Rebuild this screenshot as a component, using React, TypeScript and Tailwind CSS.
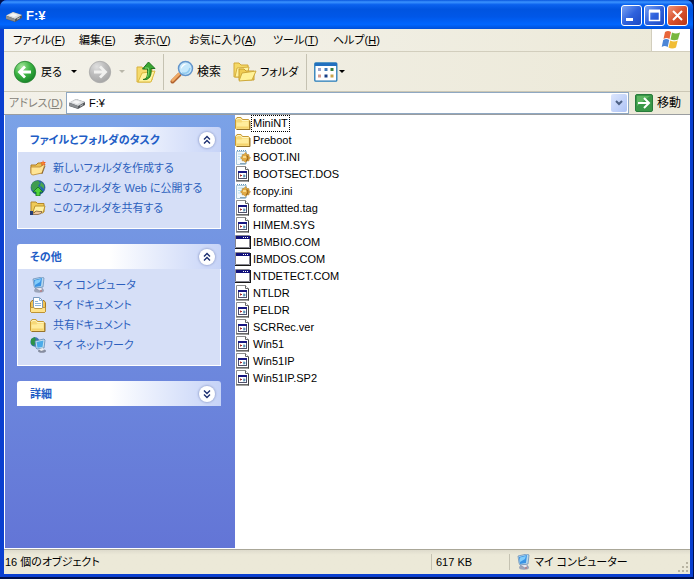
import { useState } from 'react';
import type { ReactNode } from 'react';

type FileKind = 'folder' | 'ini' | 'system' | 'program';

interface FileItem {
    name: string;
    kind: FileKind;
}

interface TaskItem {
    label: string;
    icon: ReactNode;
}

const MENUS = [
    { label: 'ファイル', mnemonic: 'F', width: 'w-[66px]' },
    { label: '編集', mnemonic: 'E', width: 'w-[55px]' },
    { label: '表示', mnemonic: 'V', width: 'w-[55px]' },
    { label: 'お気に入り', mnemonic: 'A', width: 'w-[84px]' },
    { label: 'ツール', mnemonic: 'T', width: 'w-[60px]' },
    { label: 'ヘルプ', mnemonic: 'H', width: 'w-[60px]' },
];

const FILES: FileItem[] = [
    { name: 'MiniNT', kind: 'folder' },
    { name: 'Preboot', kind: 'folder' },
    { name: 'BOOT.INI', kind: 'ini' },
    { name: 'BOOTSECT.DOS', kind: 'system' },
    { name: 'fcopy.ini', kind: 'ini' },
    { name: 'formatted.tag', kind: 'system' },
    { name: 'HIMEM.SYS', kind: 'system' },
    { name: 'IBMBIO.COM', kind: 'program' },
    { name: 'IBMDOS.COM', kind: 'program' },
    { name: 'NTDETECT.COM', kind: 'program' },
    { name: 'NTLDR', kind: 'system' },
    { name: 'PELDR', kind: 'system' },
    { name: 'SCRRec.ver', kind: 'system' },
    { name: 'Win51', kind: 'system' },
    { name: 'Win51IP', kind: 'system' },
    { name: 'Win51IP.SP2', kind: 'system' },
];

function DriveIcon() {
    return (
        <svg className="h-4 w-4 shrink-0" viewBox="0 0 16 16">
            <path d="M0 8 7 4l9 3v3l-7 4-9-3Z" fill="#55585c" />
            <path d="M0 7.5 7 4l9 3-7 4Z" fill="#d9dbdd" />
            <path d="m3 7.3 4-2 5 1.6-4 2Z" fill="#f6f6f6" />
            <path d="m0 7.8 9 3.2v2.6L0 10.8Z" fill="#8b8e92" />
            <path d="M11 11.2l3-1.6" stroke="#bfc3c6" strokeWidth="1" />
        </svg>
    );
}

function FolderIcon() {
    return (
        <svg className="h-4 w-4 shrink-0" viewBox="0 0 16 16">
            <path d="M.5 4.5 2 2.500h4l1.500 2h6l1 1v8l-1 1h-12l-1-1Z" fill="#f6d877" stroke="#c79a34" />
            <path d="M1.500 5 2.500 3.500h3l1.500 2h6.500" fill="none" stroke="#fff5c0" />
            <path d="M1.500 7.500h5l1-1h6v7h-12Z" fill="#ffec9c" />
            <path d="M1.500 11.500h12v2h-12Z" fill="#f5d36c" />
            <path d="M15 6v8.500H2" fill="none" stroke="#96732a" />
        </svg>
    );
}

function IniIcon() {
    return (
        <svg className="h-4 w-4 shrink-0" viewBox="0 0 16 16">
            <path d="M1.500 2.500h10v12l-1 1h-9Z" fill="#f2f9fd" stroke="#a9c6d8" />
            <path d="M2 1.500h10" stroke="#5f97bd" strokeDasharray="1 1" />
            <path d="M3 5h6M3 7.500h4M3 10h3" stroke="#b5dced" />
            <path d="M10.500 3.500 12 5.500l2 .2v1.600L15.500 9 14 10.200v1.600h-2l-1.500 1.700L9 11.800H7.200v-1.600L5.500 9l1.700-1.700V5.700L9 5.500Z" fill="#e2ab45" stroke="#b07d25" strokeWidth=".6" />
            <path d="M11.500 6.500c2 1 2 4-.5 5.500" fill="none" stroke="#a06b1a" strokeWidth="1.300" />
            <path d="M8 8h3" stroke="#ffe9a0" strokeWidth="1.500" />
            <path d="M5 14.500h6" stroke="#86a5b8" />
        </svg>
    );
}

function SystemIcon() {
    return (
        <svg className="h-4 w-4 shrink-0" viewBox="0 0 16 16">
            <path d="M1.500.5h9l3 3v11h-12Z" fill="#fff" stroke="#8c8c8c" />
            <path d="M10.500.5v3h3" fill="#fff" stroke="#666" />
            <path d="M13.500 4v11.500M1 15h13" fill="none" stroke="#444" />
            <rect x="3.500" y="5.500" width="8" height="7" fill="#fff" stroke="#50506c" />
            <path d="M3 6h9" stroke="#161681" strokeWidth="2" />
            <path d="M5 9.500h2M5.500 8.500v2" stroke="#a63030" />
            <path d="M9 8.500v3M8.500 10h2" stroke="#216f9c" />
        </svg>
    );
}

function ProgramIcon() {
    return (
        <svg className="h-4 w-4 shrink-0" viewBox="0 0 16 16">
            <path d="M.5 1.500h14v12H.5Z" fill="#fff" stroke="#85858f" />
            <path d="M1 3.500h14" stroke="#11117a" strokeWidth="3" />
            <path d="M8 3.500h1M10 3.500h1M12 3.500h1" stroke="#fff" />
            <path d="M15.500 2v12M0 14.500h16" fill="none" stroke="#161616" />
        </svg>
    );
}

function NewFolderIcon() {
    return (
        <svg className="h-4 w-4" viewBox="0 0 16 16">
            <path d="M1 5h5l2-2h4v10H1Z" fill="#eac055" stroke="#af7b22" />
            <path d="M1 7h9l5-3-3 9-9 2-2-1Z" fill="#ffe596" stroke="#bb8831" strokeWidth=".8" />
            <path d="m13 0 .7 2L16 2l-1.500 1.500 1 2-2-1-2 1.200.5-2.200-1.700-1.300 2.200-.1Z" fill="#f05b1f" />
            <circle cx="12.800" cy="3.300" r="1.200" fill="#f6862f" />
            <path d="m12 14 3-8" stroke="#715023" strokeWidth=".7" />
        </svg>
    );
}

function PublishIcon() {
    return (
        <svg className="h-4 w-4" viewBox="0 0 16 16">
            <circle cx="8" cy="7.500" r="7" fill="#2466ae" stroke="#244f78" strokeWidth=".6" />
            <path d="m3 2 5-1.500 2 2.500-2 3 3 2-3 4-6-2-1-4Z" fill="#3f9c50" />
            <path d="m11 2 3 3v4l-2-2-2-1Z" fill="#4aa94e" />
            <path d="m8 7 5 5h-3v4H6v-4H3Z" fill="#50d33b" stroke="#126c20" strokeWidth=".8" />
        </svg>
    );
}

function SharedFolderIcon() {
    return (
        <svg className="h-4 w-4" viewBox="0 0 16 16">
            <path d="M1 2h5l1.500 1.500H14V12H1Z" fill="#efca58" stroke="#b4872c" />
            <path d="m3 12 2-6h10l-2 7Z" fill="#fff0a2" stroke="#bd942b" />
            <path d="M0 13h4l2-2 3 .5h3l-1 2-3 1H0Z" fill="#ecc49a" stroke="#72522e" strokeWidth=".7" />
            <path d="M0 11h3v4H0Z" fill="#253d75" />
        </svg>
    );
}

function ComputerIcon() {
    return (
        <svg className="h-4 w-4 shrink-0" viewBox="0 0 16 16">
            <ellipse cx="9" cy="13.500" rx="5" ry="2.200" fill="#9ca5b8" />
            <path d="m5 11 5-1 3 2-3 2Z" fill="#e8e7ed" stroke="#777d9b" strokeWidth=".5" />
            <path d="m3 2 9-2 2 1-1 9-8 1-1-2Z" fill="#b9d9ed" stroke="#5e87b3" strokeWidth=".7" />
            <path d="m4 3 8-2-1 8-6 1Z" fill="#3993e4" />
            <path d="m5 3.500 6-1.500-1 3-5 3Z" fill="#83cdfa" />
            <path d="M10 14h2" stroke="#c76b68" />
        </svg>
    );
}

function DocumentsIcon() {
    return (
        <svg className="h-4 w-4" viewBox="0 0 16 16">
            <path d="M.5 5.500 2 3.500h12l1.500 2v9l-1 1h-13l-1-1Z" fill="#f0c457" stroke="#a77a24" />
            <path d="M3.500.5h6l3 3v8h-9Z" fill="#fff" stroke="#7899bd" />
            <path d="M9.500.5v3h3M5 4.500h3M5 6.500h6M5 8.500h6" fill="none" stroke="#8ab4d9" />
            <path d="M.5 10.500h3l1.500 1h7l1-1h2.500v4l-1 1h-13l-1-1Z" fill="#ffe28a" stroke="#b88b2d" strokeWidth=".8" />
        </svg>
    );
}

function NetworkIcon() {
    return (
        <svg className="h-4 w-4" viewBox="0 0 16 16">
            <circle cx="5" cy="5" r="4.700" fill="#3c75b8" />
            <path d="M1 2 5 0l1 4-2 5-3-2Z" fill="#2c9347" />
            <ellipse cx="12" cy="14" rx="4" ry="1.800" fill="#858c9f" />
            <path d="m5 4 9-2 1 1-1 8-7 1-1-1Z" fill="#c7e2f0" stroke="#4f7baa" strokeWidth=".7" />
            <path d="m6.500 5 7-1.500-1 6.500-5 .8Z" fill="#4aabe9" />
            <path d="m9 12 4-1 1 2-3 1Z" fill="#eee" />
        </svg>
    );
}

const FOLDER_TASKS: TaskItem[] = [
    { label: '新しいフォルダを作成する', icon: <NewFolderIcon /> },
    { label: 'このフォルダを Web に公開する', icon: <PublishIcon /> },
    { label: 'このフォルダを共有する', icon: <SharedFolderIcon /> },
];

const OTHER_PLACES: TaskItem[] = [
    { label: 'マイ コンピュータ', icon: <ComputerIcon /> },
    { label: 'マイ ドキュメント', icon: <DocumentsIcon /> },
    { label: '共有ドキュメント', icon: <FolderIcon /> },
    { label: 'マイ ネットワーク', icon: <NetworkIcon /> },
];

function FileIcon({ kind }: { kind: FileKind }) {
    if (kind === 'folder') return <FolderIcon />;
    if (kind === 'ini') return <IniIcon />;
    if (kind === 'program') return <ProgramIcon />;
    return <SystemIcon />;
}

function RoundArrow({ back = false }: { back?: boolean }) {
    return (
        <svg className="h-6 w-6 shrink-0" viewBox="0 0 24 24">
            <defs>
                <radialGradient id={back ? 'backFill' : 'forwardFill'} cx="35%" cy="25%" r="80%">
                    <stop offset="0" stopColor={back ? '#a4e69a' : '#e0e0e0'} />
                    <stop offset=".5" stopColor={back ? '#3db444' : '#bcbcbc'} />
                    <stop offset="1" stopColor={back ? '#168226' : '#a4a4a4'} />
                </radialGradient>
            </defs>
            <circle cx="12" cy="12" r="10.700" fill={back ? 'url(#backFill)' : 'url(#forwardFill)'} stroke={back ? '#23822d' : '#aaa'} strokeWidth=".8" />
            <path
                d={back ? 'M18 12H7M12 6.500 6.500 12l5.500 5.500' : 'M6 12h11M12 6.500l5.500 5.500-5.500 5.500'}
                fill="none"
                stroke={back ? '#fff' : '#f1f1ef'}
                strokeWidth="2.800"
            />
        </svg>
    );
}

function UpFolderIcon() {
    return (
        <svg className="h-6 w-5 shrink-0" viewBox="0 0 20 24">
            <path d="M1 7h5l2 2h8v11l-2 2H1Z" fill="#f5da6c" stroke="#d8b13f" />
            <path d="m2 22 4-9 13-2-4 11Z" fill="#fff3a0" stroke="#dbb83e" />
            <path d="M7 19.500c4-.5 5-4 4.500-10.500H6.500L12.500 2 19 8.500h-4c.8 7-1.500 12-8 11Z" fill="#3aa832" stroke="#1f7420" />
            <path d="M9 8h3.500c.5 4 0 7-1.500 9" fill="none" stroke="#7fd66f" />
        </svg>
    );
}

function SearchIcon() {
    return (
        <svg className="h-6 w-6 shrink-0" viewBox="0 0 24 24">
            <path d="m2.500 21.500 7-7" stroke="#b0622f" strokeWidth="4" strokeLinecap="round" />
            <path d="m2.500 20.500 7-7" stroke="#f0a964" strokeWidth="2.500" strokeLinecap="round" />
            <circle cx="15.500" cy="8.500" r="7" fill="#c5e8fc" stroke="#6395cb" strokeWidth="1.500" />
            <path d="M11 9c0-4 3-6 7-5-3 0-5 2-7 5Z" fill="#fff" />
            <path d="M12 13c4 1 7-1 8-5" fill="none" stroke="#91cbef" strokeWidth="1.500" />
        </svg>
    );
}

function FoldersIcon() {
    return (
        <svg className="h-6 w-6 shrink-0" viewBox="0 0 24 24">
            <path d="M1 3h5l2 2h7v12H1Z" fill="#f5d966" stroke="#d2a938" />
            <path d="m2 17 2-9 12-1-2 10Z" fill="#fff3a1" stroke="#d5ae43" />
            <path d="M6 9h5l2 2h8v9H6Z" fill="#efcc50" stroke="#c99e31" />
            <path d="m6 21 3-8 14-2-4 9Z" fill="#fff297" stroke="#ceaa3c" />
        </svg>
    );
}

function ViewsIcon() {
    return (
        <svg className="h-5 w-6 shrink-0" viewBox="0 0 24 20">
            <rect x=".8" y=".8" width="22" height="18.400" rx="1" fill="#fff" stroke="#2279b7" strokeWidth="1.300" />
            <path d="M1 2.500h22" stroke="#2170bf" strokeWidth="3" />
            <path d="M4 14h3" stroke="#d79b8c" strokeWidth="3" />
            <path d="M4 7.500h3" stroke="#98a4cd" strokeWidth="3" />
            <path d="M10.500 7.500h3" stroke="#427ab7" strokeWidth="3" />
            <path d="M10.500 14h3" stroke="#163d86" strokeWidth="3" />
            <path d="M16.500 7.500h3" stroke="#377e3e" strokeWidth="3" />
            <path d="M16.500 14h3" stroke="#c9a54a" strokeWidth="3" />
        </svg>
    );
}

function WindowsFlag() {
    return (
        <svg className="h-5 w-5" viewBox="0 0 20 20">
            <path d="M4 2c2-1.500 4-1.500 6 0L8.500 9C6.500 7.800 4.500 7.800 2.500 9Z" fill="#e8663a" />
            <path d="M11 2.500c2.500 1.300 5 1.300 8 0L17 9.500c-2.500 1-5 1-7.500 0Z" fill="#78b73e" />
            <path d="M2.200 10c2-1.200 4-1.200 6 0L6.700 17c-2-1.500-4-1.500-6 0Z" fill="#4d86d6" />
            <path d="M9.200 10.500c2.500 1.200 5 1.200 7.500 0L15 17.500c-2.500 1.200-5 1.200-7.500 0Z" fill="#f1bd35" />
        </svg>
    );
}

function DropArrow({ muted = false }: { muted?: boolean }) {
    return (
        <svg className="h-1 w-2 shrink-0" viewBox="0 0 8 4">
            <path d="M1 0h6L4 3Z" fill={muted ? '#b9b7aa' : '#000'} />
        </svg>
    );
}

function Mnemonic({ label, letter }: { label: string; letter: string }) {
    return (
        <>
            {label}(<span className="underline">{letter}</span>)
        </>
    );
}

function CaptionButton({ label, close = false, children }: { label: string; close?: boolean; children: ReactNode }) {
    return (
        <button
            aria-label={label}
            className={`h-[21px] w-[21px] rounded-[3px] border border-white ${close
                ? 'bg-linear-to-br from-[#ee9478] via-[#d9512c] to-[#b83616]'
                : 'bg-linear-to-br from-[#7ba1f2] via-[#2f62dd] to-[#1c49c4]'
                }`}
        >
            <svg className="h-[19px] w-[19px]" viewBox="0 0 19 19" fill="none" stroke="#fff">
                {children}
            </svg>
        </button>
    );
}

function TaskPanel({ title, items, initiallyOpen = true }: { title: string; items: TaskItem[]; initiallyOpen?: boolean }) {
    const [open, setOpen] = useState(initiallyOpen);

    return (
        <section>
            <div className="flex h-[25px] items-center justify-between rounded-t-[3px] bg-linear-to-r from-white from-45% to-[#c6d3f7] pr-[6px] pl-[13px]">
                <h2 className="font-bold text-[#215dc6]">{title}</h2>
                <button
                    aria-label={title}
                    aria-expanded={open}
                    onClick={() => setOpen(!open)}
                    className="flex h-4 w-4 items-center justify-center rounded-full bg-white shadow-[0_0_2px_1px_#a3b0d8]"
                >
                    <svg className={`h-[10px] w-[10px] ${open ? '' : 'rotate-180'}`} viewBox="0 0 10 10" fill="none" stroke="#1c2f70" strokeWidth="1.400">
                        <path d="m2 4.500 3-3 3 3M2 8.500l3-3 3 3" />
                    </svg>
                </button>
            </div>
            {open && (
                <ul className="border border-t-0 border-white bg-[#d6dff7] pt-[6px] pb-[10px] pl-3">
                    {items.map((item) => (
                        <li key={item.label}>
                            <a href="#" className="flex h-5 items-center gap-[7px] whitespace-nowrap text-[#2d5fbd] hover:underline">
                                {item.icon}
                                {item.label}
                            </a>
                        </li>
                    ))}
                </ul>
            )}
        </section>
    );
}

export default function App() {
    const [selected, setSelected] = useState('MiniNT');
    const [address, setAddress] = useState('F:¥');

    return (
        <div className="flex min-h-screen flex-col bg-[#00104a] pr-px pb-[2px] font-['Liberation_Sans','Noto_Sans_CJK_JP',sans-serif] text-[11px] leading-4 text-black [font-feature-settings:'palt']">
            <div className="flex grow flex-col rounded-t-[7px] bg-[#0a3fd0]">
                <header className="flex h-[29px] shrink-0 items-center gap-1 rounded-t-[7px] bg-[linear-gradient(#0855dd_0%,#3b93ff_7%,#0b62ee_16%,#0054e0_32%,#0057e8_58%,#0066ff_84%,#0050d8_100%)] pt-[2px] pr-[5px] pl-[6px]">
                    <DriveIcon />
                    <h1 className="grow text-[13px] font-bold text-white">F:¥</h1>
                    <div className="flex gap-[2px]">
                        <CaptionButton label="最小化">
                            <path d="M4 13.500h7" strokeWidth="3" />
                        </CaptionButton>
                        <CaptionButton label="最大化">
                            <path d="M4.500 5.500h10v9h-10Z" strokeWidth="1.500" />
                            <path d="M4 5h11" strokeWidth="3" />
                        </CaptionButton>
                        <CaptionButton label="閉じる" close>
                            <path d="m5 5 9 9M14 5l-9 9" strokeWidth="2" />
                        </CaptionButton>
                    </div>
                </header>

                <div className="mr-[3px] mb-[3px] ml-1 flex grow flex-col bg-[#ece9d8]">
                    <nav className="flex h-[23px] items-stretch border-b border-[#d2cebd] bg-linear-to-r from-[#f5f4ef] to-[#ece9d8] pl-[9px]">
                        {MENUS.map((menu) => (
                            <button key={menu.mnemonic} className={`${menu.width} text-left whitespace-nowrap`}>
                                <Mnemonic label={menu.label} letter={menu.mnemonic} />
                            </button>
                        ))}
                        <div className="ml-auto flex w-[39px] items-center justify-center border-l border-[#d2cebd] bg-white">
                            <WindowsFlag />
                        </div>
                    </nav>

                    <div className="flex h-10 items-center border-b border-[#cbc7b5] bg-linear-to-r from-[#f3f1e9] to-[#ece9d8] pl-[9px]">
                        <button className="flex w-[75px] items-center gap-1">
                            <RoundArrow back />
                            <span className="w-[25px] text-left whitespace-nowrap">戻る</span>
                            <DropArrow />
                        </button>
                        <button aria-label="進む" disabled className="flex w-12 items-center gap-[6px]">
                            <RoundArrow />
                            <DropArrow muted />
                        </button>
                        <button aria-label="上へ">
                            <UpFolderIcon />
                        </button>
                        <div className="ml-[7px] h-9 w-px bg-[#c5c2b2]" />
                        <button className="ml-[6px] flex w-[63px] items-center gap-[3px] text-[12px] whitespace-nowrap">
                            <SearchIcon />
                            検索
                        </button>
                        <button className="flex w-[73px] items-center gap-[3px] whitespace-nowrap">
                            <FoldersIcon />
                            フォルダ
                        </button>
                        <div className="h-9 w-px bg-[#c5c2b2]" />
                        <button aria-label="表示" className="ml-[7px] flex items-center">
                            <ViewsIcon />
                            <DropArrow />
                        </button>
                    </div>

                    <div className="flex h-[23px] items-center border-b border-[#9a9da0] bg-linear-to-r from-[#f3f1e9] to-[#ece9d8] pl-[5px]">
                        <label htmlFor="address" className="w-[57px] whitespace-nowrap text-[#85837a]">
                            <Mnemonic label="アドレス" letter="D" />
                        </label>
                        <div className="flex h-[22px] grow items-center border border-[#8fa8c2] bg-white pr-px pl-[2px]">
                            <DriveIcon />
                            <input
                                id="address"
                                value={address}
                                onChange={(e) => setAddress(e.target.value)}
                                className="min-w-0 grow pl-1 outline-none"
                            />
                            <button aria-label="アドレス一覧" className="flex h-[18px] w-4 items-center justify-center rounded-[2px] bg-linear-to-br from-[#dce6fd] to-[#aec3f5]">
                                <svg className="h-2 w-2" viewBox="0 0 8 8" fill="none" stroke="#4d6185" strokeWidth="2">
                                    <path d="m1 2 3 3 3-3" />
                                </svg>
                            </button>
                        </div>
                        <button className="ml-[6px] flex w-[55px] items-center gap-1 text-[12px] whitespace-nowrap">
                            <svg className="h-[18px] w-[18px] shrink-0" viewBox="0 0 18 18">
                                <rect x=".5" y=".5" width="17" height="17" rx="1.500" fill="#399747" stroke="#287c3b" />
                                <path d="M2 2h13L2 12Z" fill="#5db661" />
                                <path d="M3 9h11M9 4l5 5-5 5" fill="none" stroke="#fff" strokeWidth="2" />
                            </svg>
                            移動
                        </button>
                    </div>

                    <div className="flex grow">
                        <aside className="flex w-[231px] shrink-0 flex-col gap-[15px] border-b border-l border-white bg-linear-to-b from-[#7ba2e7] to-[#6375d6] pt-3 pr-[14px] pl-3">
                            <TaskPanel title="ファイルとフォルダのタスク" items={FOLDER_TASKS} />
                            <TaskPanel title="その他" items={OTHER_PLACES} />
                            <TaskPanel title="詳細" items={[]} initiallyOpen={false} />
                        </aside>
                        <main className="grow bg-white">
                            <ul>
                                {FILES.map((file) => (
                                    <li key={file.name}>
                                        <button
                                            onClick={() => setSelected(file.name)}
                                            className="flex h-[17px] items-start outline-none"
                                        >
                                            <FileIcon kind={file.kind} />
                                            <span className={`border px-px leading-[15px] ${selected === file.name ? 'border-dotted border-black' : 'border-transparent'}`}>
                                                {file.name}
                                            </span>
                                        </button>
                                    </li>
                                ))}
                            </ul>
                        </main>
                    </div>

                    <footer className="flex h-[25px] items-center border-t border-[#aaa798] bg-linear-to-b from-[#dedbcc] via-[#ece9d8] via-20% to-[#ece9d8]">
                        <p className="grow pl-px">16 個のオブジェクト</p>
                        <p className="w-[78px] border-l border-[#c5c2b2] pl-1">617 KB</p>
                        <div className="flex w-[169px] items-center gap-[3px] border-l border-[#c5c2b2] pl-[5px] whitespace-nowrap">
                            <ComputerIcon />
                            マイ コンピューター
                        </div>
                        <svg className="h-3 w-3 self-end" viewBox="0 0 12 12" fill="#b8b4a2">
                            <path d="M8 0h2v2H8ZM4 4h2v2H4ZM8 4h2v2H8ZM0 8h2v2H0ZM4 8h2v2H4ZM8 8h2v2H8Z" />
                        </svg>
                    </footer>
                </div>
            </div>
        </div>
    );
}
